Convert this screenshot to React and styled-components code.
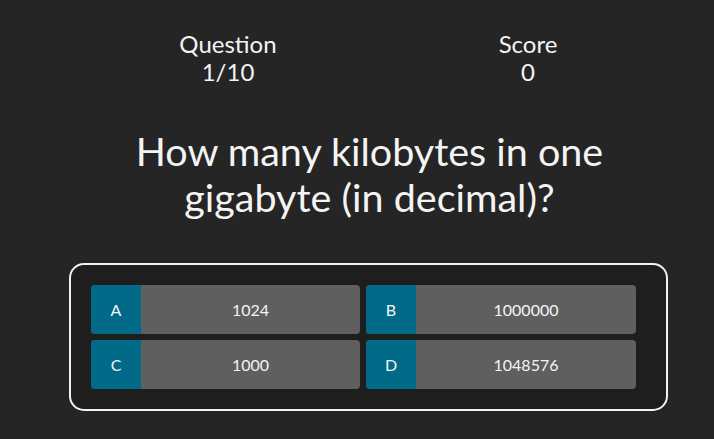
import React from "react";
import styled, { createGlobalStyle } from "styled-components";

const Global = createGlobalStyle`
  html, body { margin: 0; padding: 0; background: #252525; }
  body { font-family: Lato, "Noto Sans", sans-serif; color: #f4f4f4; }
  * { box-sizing: border-box; }
`;

const Page = styled.main`
  min-height: 439px;
  display: flex;
  flex-direction: column;
  align-items: center;
  padding: 30px 0 0 23px;
`;

const Header = styled.header`
  width: 600px;
  margin-left: 19px;
  display: grid;
  grid-template-columns: 1fr 1fr;
`;

const Stat = styled.div`
  text-align: center;
  font-size: 24px;
  line-height: 28px;
`;

const Question = styled.h1`
  margin: 42px 0 0 2px;
  width: 520px;
  text-align: center;
  font-weight: 400;
  font-size: 39.5px;
  line-height: 46px;
`;

const Panel = styled.section`
  margin-top: 43px;
  width: 599px;
  border: 2px solid #f2f2f2;
  border-radius: 15px;
  background: #1e1e1e;
  padding: 20px 30px 20px 20px;
`;

const Grid = styled.div`
  display: grid;
  grid-template-columns: 269px 270px;
  gap: 6px;
`;

const Option = styled.button`
  display: flex;
  height: 49px;
  padding: 0;
  border: none;
  border-radius: 4px;
  overflow: hidden;
  background: #5f5f5f;
  color: #f4f4f4;
  font-family: inherit;
  font-size: 16px;
  cursor: pointer;
`;

const Letter = styled.span`
  width: 50px;
  flex: none;
  display: flex;
  align-items: center;
  justify-content: center;
  background: #016a89;
`;

const Value = styled.span`
  flex: 1;
  display: flex;
  align-items: center;
  justify-content: center;
`;

const options = [
  ["A", "1024"],
  ["B", "1000000"],
  ["C", "1000"],
  ["D", "1048576"],
];

export default function App() {
  return (
    <>
      <Global />
      <Page>
        <Header>
          <Stat>
            Question
            <br />
            1/10
          </Stat>
          <Stat>
            Score
            <br />0
          </Stat>
        </Header>
        <Question>How many kilobytes in one gigabyte (in decimal)?</Question>
        <Panel>
          <Grid>
            {options.map(([l, v]) => (
              <Option key={l}>
                <Letter>{l}</Letter>
                <Value>{v}</Value>
              </Option>
            ))}
          </Grid>
        </Panel>
      </Page>
    </>
  );
}
